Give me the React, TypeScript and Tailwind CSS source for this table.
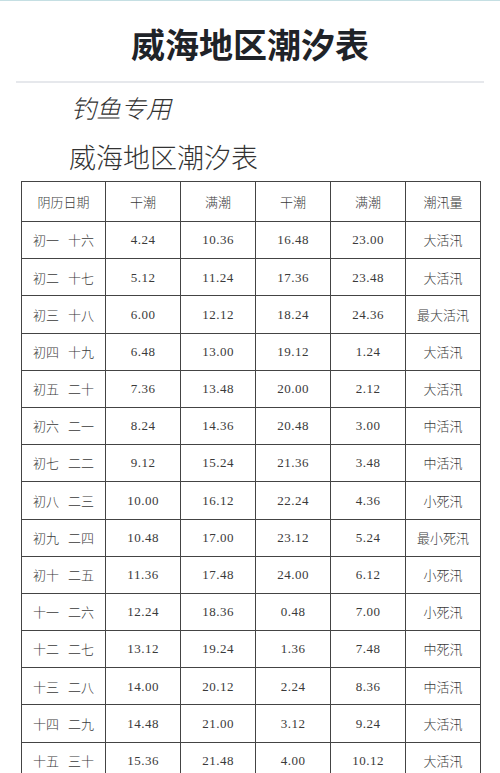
const rows: string[][] = [
  ['初一', '十六', '4.24', '10.36', '16.48', '23.00', '大活汛'],
  ['初二', '十七', '5.12', '11.24', '17.36', '23.48', '大活汛'],
  ['初三', '十八', '6.00', '12.12', '18.24', '24.36', '最大活汛'],
  ['初四', '十九', '6.48', '13.00', '19.12', '1.24', '大活汛'],
  ['初五', '二十', '7.36', '13.48', '20.00', '2.12', '大活汛'],
  ['初六', '二一', '8.24', '14.36', '20.48', '3.00', '中活汛'],
  ['初七', '二二', '9.12', '15.24', '21.36', '3.48', '中活汛'],
  ['初八', '二三', '10.00', '16.12', '22.24', '4.36', '小死汛'],
  ['初九', '二四', '10.48', '17.00', '23.12', '5.24', '最小死汛'],
  ['初十', '二五', '11.36', '17.48', '24.00', '6.12', '小死汛'],
  ['十一', '二六', '12.24', '18.36', '0.48', '7.00', '小死汛'],
  ['十二', '二七', '13.12', '19.24', '1.36', '7.48', '中死汛'],
  ['十三', '二八', '14.00', '20.12', '2.24', '8.36', '中活汛'],
  ['十四', '二九', '14.48', '21.00', '3.12', '9.24', '大活汛'],
  ['十五', '三十', '15.36', '21.48', '4.00', '10.12', '大活汛'],
]

const headers = ['阴历日期', '干潮', '满潮', '干潮', '满潮', '潮汛量']

const cjk = "font-['Noto_Sans_CJK_SC',sans-serif]"

export default function App() {
  return (
    <div className="min-h-screen bg-white border-t border-[#c5dfe3] overflow-hidden">
      <h1 className={`${cjk} text-center font-semibold text-[34px] leading-[40px] pt-[23px] pb-[17px] text-[#1f2328]`}>
        威海地区潮汐表
      </h1>
      <div className="mx-4 border-t-2 border-[#e6e8ec]" />

      <p className={`${cjk} mt-[6px] pl-[71px] italic font-light text-[25px] leading-[36px] text-[#333]`}>
        钓鱼专用
      </p>
      <p className={`${cjk} mt-[14px] pl-[69px] font-light text-[27px] leading-[36px] text-[#333]`}>
        威海地区潮汐表
      </p>

      <table className="mt-[6px] ml-[21px] w-[459px] border-collapse table-fixed text-[#3a3a3a]">
        <colgroup>
          <col className="w-[84px]" />
          <col className="w-[75px]" />
          <col className="w-[75px]" />
          <col className="w-[75px]" />
          <col className="w-[75px]" />
          <col className="w-[75px]" />
        </colgroup>
        <thead>
          <tr className="h-[40px]">
            {headers.map((h, i) => (
              <th key={i} className={`${cjk} border border-[#444] font-light text-[13px] text-center`}>
                {h}
              </th>
            ))}
          </tr>
        </thead>
        <tbody>
          {rows.map((r, i) => (
            <tr key={i} className="h-[37.2px]">
              <td className={`${cjk} border border-[#444] font-light text-[13px] text-center`}>
                {r[0]}
                <span className="ml-[9px]">{r[1]}</span>
              </td>
              {r.slice(2, 6).map((v, j) => (
                <td key={j} className="border border-[#444] text-center text-[13px] font-['Liberation_Serif',serif] tracking-[0.5px]">
                  {v}
                </td>
              ))}
              <td className={`${cjk} border border-[#444] font-light text-[13px] text-center`}>
                {r[6]}
              </td>
            </tr>
          ))}
        </tbody>
      </table>
    </div>
  )
}
